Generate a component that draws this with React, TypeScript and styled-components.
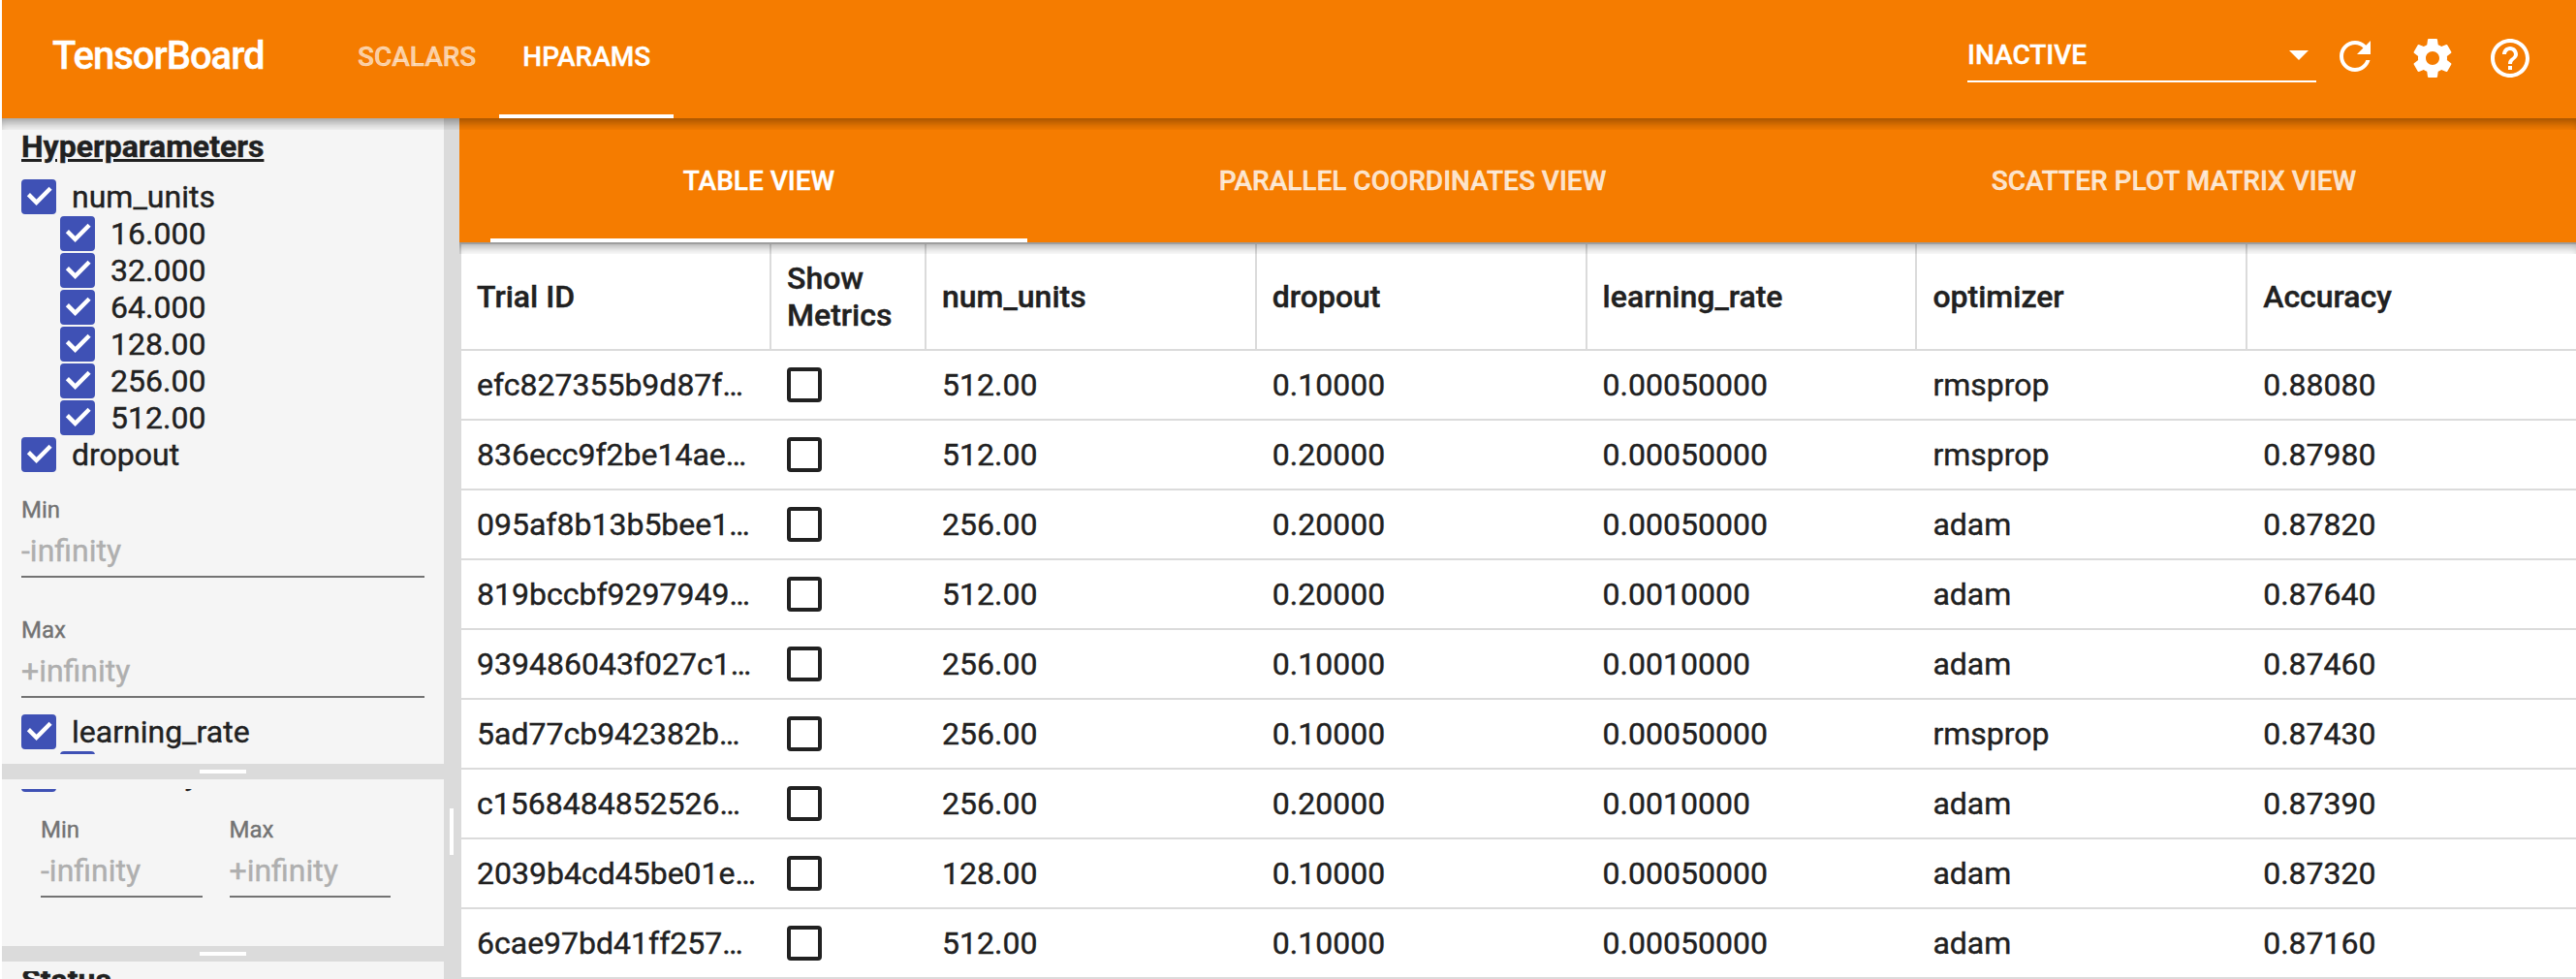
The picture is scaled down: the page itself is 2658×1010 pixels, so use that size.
import React from "react";
import styled, { createGlobalStyle } from "styled-components";

const colors = {
  brand: "#f57c00",
  pane: "#f5f5f5",
  divider: "#dbdbdb",
  ink: "#212121",
  label: "#737373",
  placeholder: "#afafaf",
  check: "#3f51b5",
};

const GlobalStyle = createGlobalStyle`
  *, *::before, *::after { box-sizing: border-box; }
  body {
    margin: 0;
    background: #fff;
    color: ${colors.ink};
    font-family: Roboto, "Noto Sans", sans-serif;
    font-size: 32px;
    line-height: 38px;
    -webkit-font-smoothing: antialiased;
    -webkit-text-stroke: 0.4px currentColor;
  }
`;

const Page = styled.div`
  display: flex;
  flex-direction: column;
  width: 2658px;
  height: 1010px;
  padding-left: 2px;
  overflow: hidden;
`;

const DropShadow = styled.div`
  position: absolute;
  top: 100%;
  left: 0;
  right: 0;
  height: 12px;
  z-index: 2;
  pointer-events: none;
  box-shadow: inset 0 10px 12px -6px rgba(0, 0, 0, 0.4);
`;

const Toolbar = styled.header`
  position: relative;
  display: flex;
  flex: none;
  height: 122px;
  padding: 0 44px 0 52px;
  background: ${colors.brand};
  color: #fff;
`;

const Brand = styled.div`
  width: 291px;
  font-size: 40px;
  font-weight: 500;
  letter-spacing: -1px;
  line-height: 115px;
`;

const PluginTabs = styled.nav`
  display: flex;
  flex: 1;
`;

const PluginTab = styled.div<{ $active?: boolean }>`
  padding: 0 24px;
  font-size: 28px;
  font-weight: 500;
  line-height: 117px;
  color: ${(p) => (p.$active ? "#fff" : "rgba(255, 255, 255, 0.65)")};
  border-bottom: 4px solid ${(p) => (p.$active ? "#fff" : "transparent")};
`;

const Select = styled.div`
  display: flex;
  justify-content: space-between;
  width: 360px;
  height: 53px;
  margin: 32px 16px 0 0;
  border-bottom: 2px solid #fff;
  font-size: 28px;
  font-weight: 500;
  line-height: 50px;
`;

const Caret = styled.svg`
  width: 48px;
  height: 48px;
  margin-right: -6px;
  fill: #fff;
`;

const Icon = styled.svg<{ $raise?: boolean }>`
  width: 48px;
  height: 48px;
  margin: ${(p) => (p.$raise ? "34px 32px 0 0" : "36px 32px 0 0")};
  fill: #fff;
  &:last-of-type { margin-right: 0; }
`;

const Body = styled.div`
  display: flex;
  flex: 1;
  min-height: 0;
`;

const Sidebar = styled.aside`
  display: flex;
  flex-direction: column;
  flex: none;
  width: 456px;
  background: ${colors.pane};
`;

const Pane = styled.section<{ $height: number }>`
  flex: none;
  height: ${(p) => p.$height}px;
  padding: 10px 20px;
`;

const Scroller = styled.div`
  height: 100%;
  overflow: hidden;
`;

const Scrolled = styled.div<{ $by: number }>`
  margin-top: ${(p) => -p.$by}px;
`;

const RowSplitter = styled.div`
  display: flex;
  flex: none;
  align-items: center;
  justify-content: center;
  height: 16px;
  background: ${colors.divider};
  &::after { content: ""; width: 48px; height: 4px; background: #fff; }
`;

const ColumnSplitter = styled.div`
  display: flex;
  flex: none;
  justify-content: center;
  width: 16px;
  padding-top: 712px;
  background: ${colors.divider};
  &::after { content: ""; width: 4px; height: 48px; background: #fff; }
`;

const Heading = styled.h3`
  margin: 0 0 14px;
  font-size: 32px;
  font-weight: 700;
  line-height: 38px;
  text-decoration: underline;
`;

const CheckRow = styled.label<{ $nested?: boolean }>`
  display: flex;
  align-items: center;
  gap: 16px;
  height: 38px;
  padding-left: ${(p) => (p.$nested ? 40 : 0)}px;
`;

const Box = styled.span<{ $checked?: boolean }>`
  display: flex;
  flex: none;
  width: 36px;
  height: 36px;
  border: 4px solid ${(p) => (p.$checked ? colors.check : colors.ink)};
  border-radius: 4px;
  background: ${(p) => (p.$checked ? colors.check : "transparent")};
  svg { width: 28px; height: 28px; fill: none; stroke: #fff; stroke-width: 4.4; }
`;

const Field = styled.div`
  flex: 1;
  height: 124px;
  padding-top: 16px;
`;

const FieldLabel = styled.div`
  height: 40px;
  font-size: 24px;
  line-height: 44px;
  color: ${colors.label};
`;

const FieldInput = styled.div`
  height: 52px;
  border-bottom: 2px solid ${colors.label};
  line-height: 48px;
  color: ${colors.placeholder};
`;

const RangeFields = styled.div`
  display: flex;
  gap: 28px;
  padding: 0 35px 0 20px;
`;

const Content = styled.main`
  display: flex;
  flex-direction: column;
  flex: 1;
  min-width: 0;
`;

const ViewTabs = styled.nav`
  position: relative;
  display: grid;
  grid-template-columns: 618px 731px 840px;
  flex: none;
  height: 128px;
  background: ${colors.brand};
`;

const ViewTab = styled.div<{ $active?: boolean }>`
  display: flex;
  justify-content: center;
  height: 128px;
  margin: 0 32px;
  font-size: 28px;
  font-weight: 500;
  line-height: 129px;
  color: ${(p) => (p.$active ? "#fff" : "rgba(255, 255, 255, 0.8)")};
  box-shadow: ${(p) => (p.$active ? "inset 0 -4px #fff" : "none")};
`;

const Table = styled.div`
  border: solid ${colors.divider};
  border-width: 2px 0 0 2px;
  background: #fff;
`;

const TableRow = styled.div<{ $header?: boolean }>`
  display: grid;
  grid-template-columns: 320px 160px repeat(5, 340.8px);
  height: ${(p) => (p.$header ? 110 : 72)}px;
  border-bottom: 2px solid ${colors.divider};
  font-weight: ${(p) => (p.$header ? 500 : 400)};
`;

const Cell = styled.div<{ $ruled?: boolean }>`
  display: flex;
  align-items: center;
  padding: 0 14px 0 16px;
  border-right: 2px solid ${(p) => (p.$ruled ? colors.divider : "transparent")};
  white-space: ${(p) => (p.$ruled ? "normal" : "nowrap")};
`;

const Check = ({ label, nested }: { label: string; nested?: boolean }) => (
  <CheckRow $nested={nested}>
    <Box $checked>
      <svg viewBox="0 0 28 28">
        <path d="M3.4 11.6 L11.6 19.8 L26.1 5.3" />
      </svg>
    </Box>
    {label}
  </CheckRow>
);

const TextField = ({ label, hint }: { label: string; hint: string }) => (
  <Field>
    <FieldLabel>{label}</FieldLabel>
    <FieldInput>{hint}</FieldInput>
  </Field>
);

const unitValues = ["16.000", "32.000", "64.000", "128.00", "256.00", "512.00"];

const columns = ["Trial ID", "Show Metrics", "num_units", "dropout", "learning_rate", "optimizer", "Accuracy"];

const trials = [
  ["efc827355b9d87f…", "512.00", "0.10000", "0.00050000", "rmsprop", "0.88080"],
  ["836ecc9f2be14ae…", "512.00", "0.20000", "0.00050000", "rmsprop", "0.87980"],
  ["095af8b13b5bee1…", "256.00", "0.20000", "0.00050000", "adam", "0.87820"],
  ["819bccbf9297949…", "512.00", "0.20000", "0.0010000", "adam", "0.87640"],
  ["939486043f027c1…", "256.00", "0.10000", "0.0010000", "adam", "0.87460"],
  ["5ad77cb942382b…", "256.00", "0.10000", "0.00050000", "rmsprop", "0.87430"],
  ["c1568484852526…", "256.00", "0.20000", "0.0010000", "adam", "0.87390"],
  ["2039b4cd45be01e…", "128.00", "0.10000", "0.00050000", "adam", "0.87320"],
  ["6cae97bd41ff257…", "512.00", "0.10000", "0.00050000", "adam", "0.87160"],
];

export default function App() {
  return (
    <>
      <GlobalStyle />
      <Page>
        <Toolbar>
          <Brand>TensorBoard</Brand>
          <PluginTabs>
            <PluginTab>SCALARS</PluginTab>
            <PluginTab $active>HPARAMS</PluginTab>
          </PluginTabs>
          <Select>
            INACTIVE
            <Caret viewBox="0 0 24 24">
              <path d="M7 10l5 5 5-5z" />
            </Caret>
          </Select>
          <Icon viewBox="0 0 24 24" $raise>
            <path d="M17.65 6.35C16.2 4.9 14.21 4 12 4c-4.42 0-7.99 3.58-7.99 8s3.57 8 7.99 8c3.73 0 6.84-2.55 7.73-6h-2.08c-.82 2.33-3.04 4-5.65 4-3.31 0-6-2.69-6-6s2.69-6 6-6c1.66 0 3.14.69 4.22 1.78L13 11h7V4l-2.35 2.35z" />
          </Icon>
          <Icon viewBox="0 0 24 24">
            <path d="M19.43 12.98c.04-.32.07-.64.07-.98s-.03-.66-.07-.98l2.11-1.65c.19-.15.24-.42.12-.64l-2-3.46c-.12-.22-.39-.3-.61-.22l-2.49 1c-.52-.4-1.08-.73-1.69-.98l-.38-2.65C14.46 2.18 14.25 2 14 2h-4c-.25 0-.46.18-.49.42l-.38 2.65c-.61.25-1.17.59-1.69.98l-2.49-1c-.23-.09-.49 0-.61.22l-2 3.46c-.13.22-.07.49.12.64l2.11 1.65c-.04.32-.07.65-.07.98s.03.66.07.98l-2.11 1.65c-.19.15-.24.42-.12.64l2 3.46c.12.22.39.3.61.22l2.49-1c.52.4 1.08.73 1.69.98l.38 2.65c.03.24.24.42.49.42h4c.25 0 .46-.18.49-.42l.38-2.65c.61-.25 1.17-.59 1.69-.98l2.49 1c.23.09.49 0 .61-.22l2-3.46c.12-.22.07-.49-.12-.64l-2.11-1.65zM12 15.5c-1.93 0-3.5-1.57-3.5-3.5s1.57-3.5 3.5-3.5 3.5 1.57 3.5 3.5-1.57 3.5-3.5 3.5z" />
          </Icon>
          <Icon viewBox="0 0 24 24">
            <path d="M11 18h2v-2h-2v2zm1-16C6.48 2 2 6.48 2 12s4.48 10 10 10 10-4.48 10-10S17.52 2 12 2zm0 18c-4.41 0-8-3.59-8-8s3.59-8 8-8 8 3.59 8 8-3.59 8-8 8zm0-14c-2.21 0-4 1.79-4 4h2c0-1.1.9-2 2-2s2 .9 2 2c0 2-3 1.75-3 5h2c0-2.25 3-2.5 3-5 0-2.21-1.79-4-4-4z" />
          </Icon>
          <DropShadow />
        </Toolbar>
        <Body>
          <Sidebar>
            <Pane $height={666}>
              <Scroller>
                <Heading>Hyperparameters</Heading>
                <Check label="num_units" />
                {unitValues.map((v) => (
                  <Check key={v} label={v} nested />
                ))}
                <Check label="dropout" />
                <TextField label="Min" hint="-infinity" />
                <TextField label="Max" hint="+infinity" />
                <Check label="learning_rate" />
                <Check label="" nested />
              </Scroller>
            </Pane>
            <RowSplitter />
            <Pane $height={172}>
              <Scroller>
                <Scrolled $by={34}>
                  <Check label="Accuracy" />
                  <RangeFields>
                    <TextField label="Min" hint="-infinity" />
                    <TextField label="Max" hint="+infinity" />
                  </RangeFields>
                </Scrolled>
              </Scroller>
            </Pane>
            <RowSplitter />
            <Pane $height={60}>
              <Scroller>
                <Scrolled $by={10}>
                  <Heading>Status</Heading>
                </Scrolled>
              </Scroller>
            </Pane>
          </Sidebar>
          <ColumnSplitter />
          <Content>
            <ViewTabs>
              <ViewTab $active>TABLE VIEW</ViewTab>
              <ViewTab>PARALLEL COORDINATES VIEW</ViewTab>
              <ViewTab>SCATTER PLOT MATRIX VIEW</ViewTab>
              <DropShadow />
            </ViewTabs>
            <Table>
              <TableRow $header>
                {columns.map((c, i) => (
                  <Cell key={c} $ruled={i < columns.length - 1}>
                    {c}
                  </Cell>
                ))}
              </TableRow>
              {trials.map(([id, ...values]) => (
                <TableRow key={id}>
                  <Cell>{id}</Cell>
                  <Cell>
                    <Box />
                  </Cell>
                  {values.map((v, i) => (
                    <Cell key={i}>{v}</Cell>
                  ))}
                </TableRow>
              ))}
            </Table>
          </Content>
        </Body>
      </Page>
    </>
  );
}
